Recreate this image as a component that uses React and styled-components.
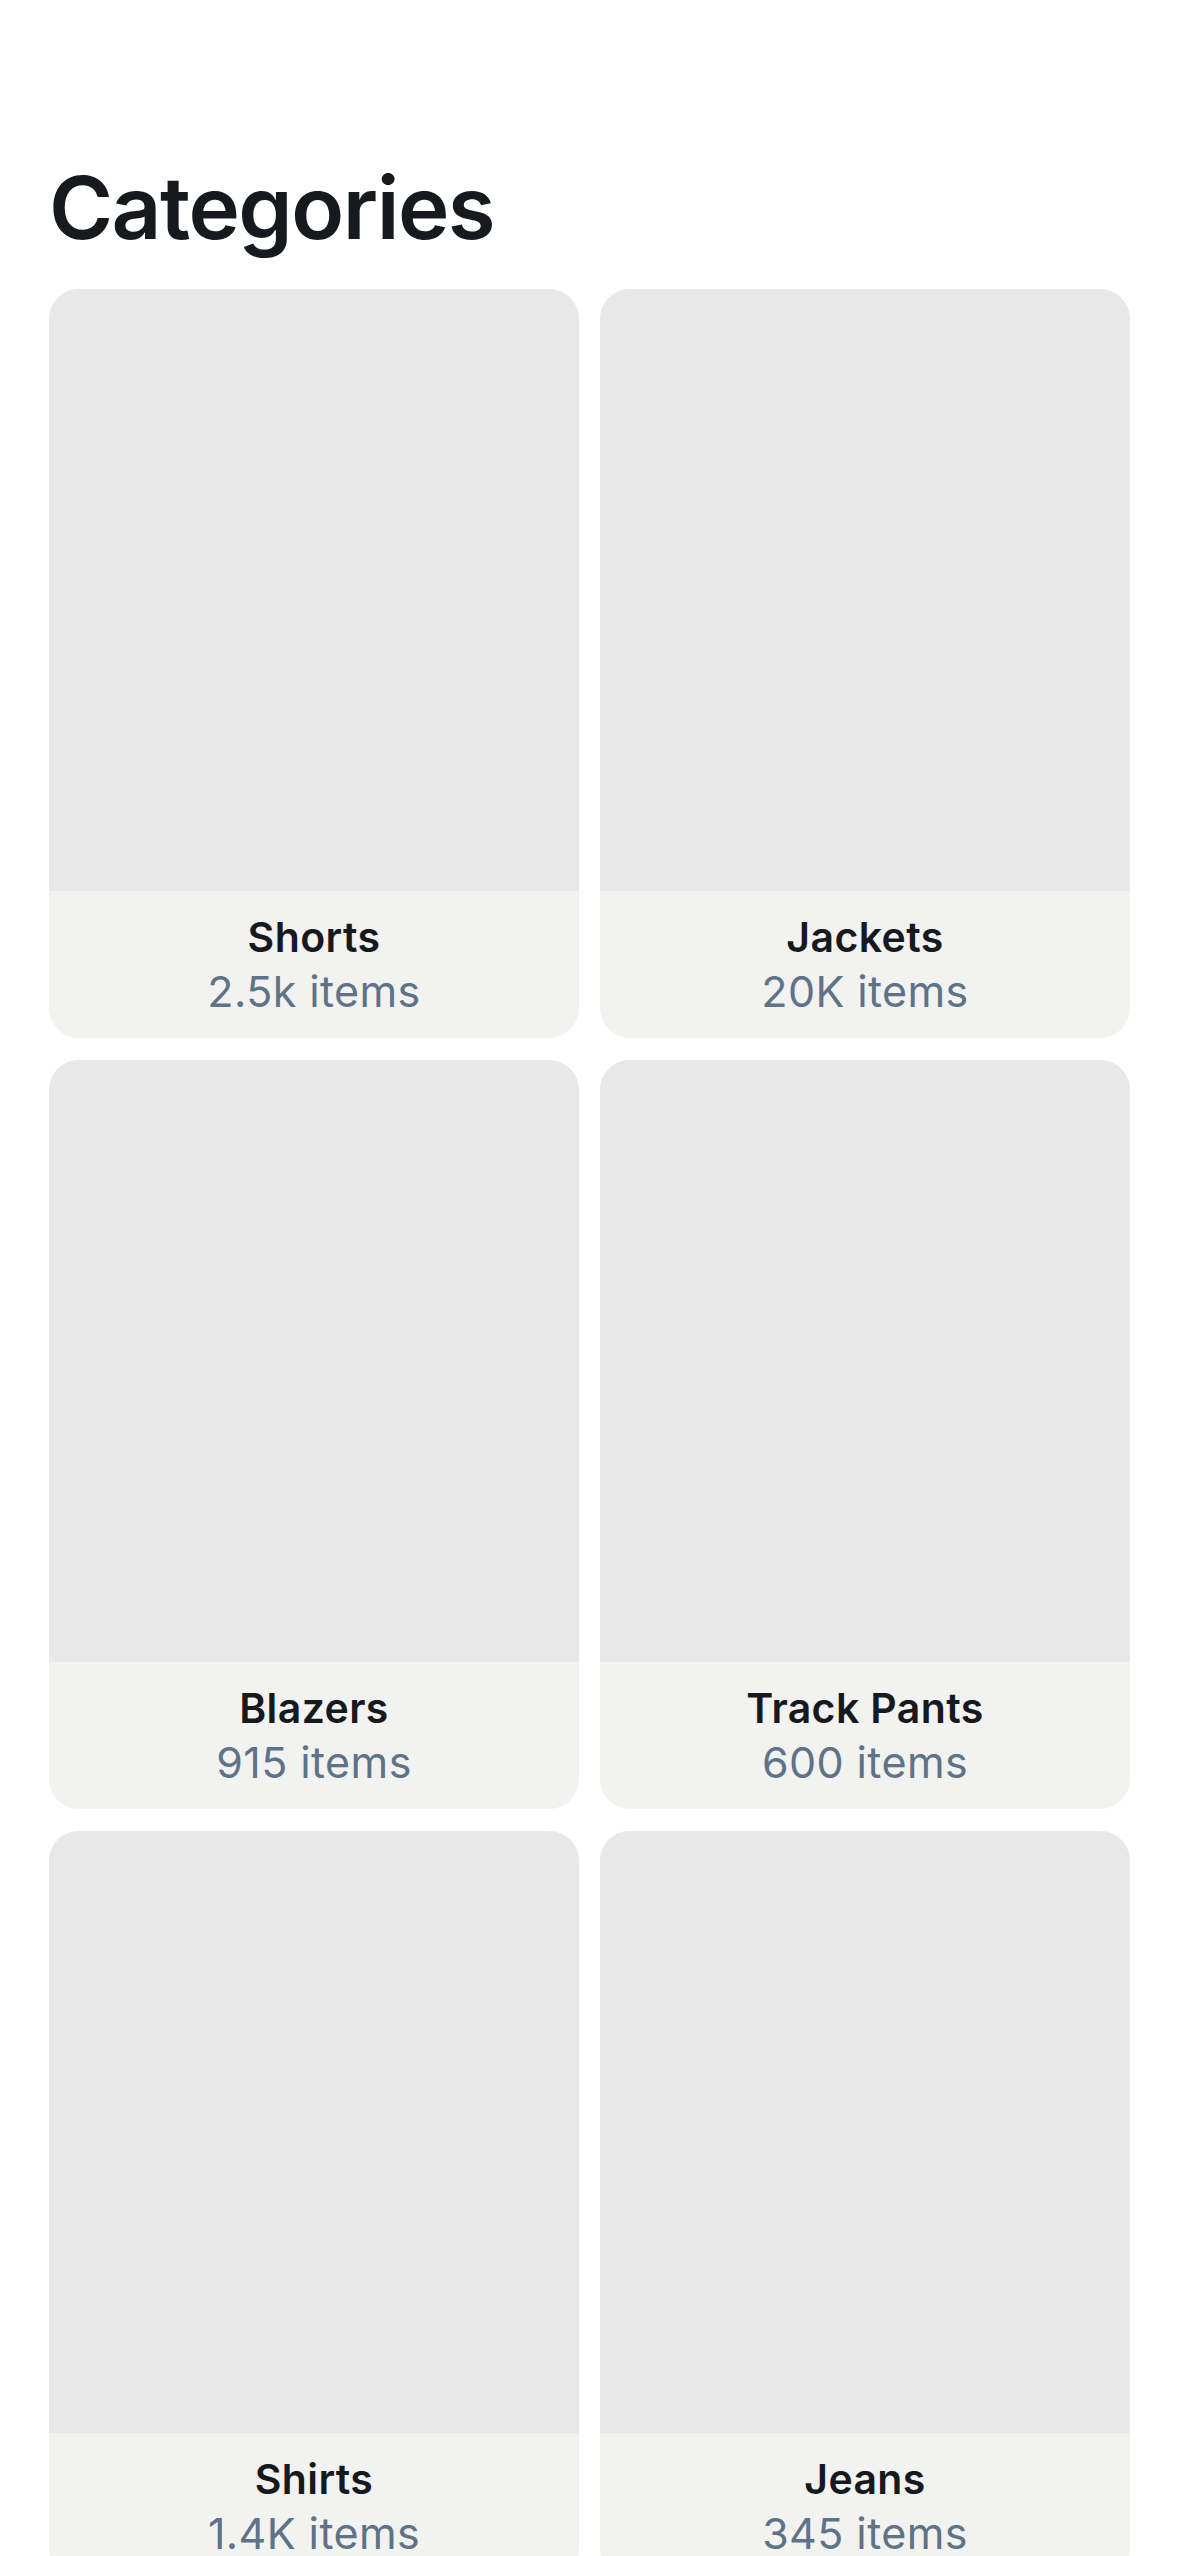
import React from "react";
import styled, { createGlobalStyle } from "styled-components";

const GlobalStyle = createGlobalStyle`
  html, body {
    margin: 0;
    padding: 0;
    background: #ffffff;
    font-family: Inter, "Noto Sans", sans-serif;
  }
`;

const Page = styled.div`
  padding: 156px 49px 0;
`;

const Title = styled.h1`
  margin: 0 0 29px;
  font-size: 87px;
  line-height: 104px;
  font-weight: 600;
  letter-spacing: -1.5px;
  color: #16191d;
`;

const Grid = styled.div`
  display: grid;
  grid-template-columns: 1fr 1fr;
  column-gap: 21px;
  row-gap: 22px;
`;

const Card = styled.div`
  border-radius: 30px;
  overflow: hidden;
  background: #f2f2f1;
`;

const Thumb = styled.div`
  height: 602px;
  background: #e8e8e8;
`;

const Footer = styled.div`
  display: flex;
  flex-direction: column;
  align-items: center;
  padding: 19px 0 20px;
`;

const Name = styled.div`
  font-size: 41px;
  line-height: 54px;
  font-weight: 600;
  letter-spacing: 0.4px;
  color: #16191d;
`;

const Count = styled.div`
  font-size: 43px;
  line-height: 54px;
  font-weight: 400;
  letter-spacing: 0.4px;
  color: #5e7387;
`;

const categories = [
  { name: "Shorts", count: "2.5k items" },
  { name: "Jackets", count: "20K items" },
  { name: "Blazers", count: "915 items" },
  { name: "Track Pants", count: "600 items" },
  { name: "Shirts", count: "1.4K items" },
  { name: "Jeans", count: "345 items" },
];

function App() {
  return (
    <>
      <GlobalStyle />
      <Page>
        <Title>Categories</Title>
        <Grid>
          {categories.map(c => (
            <Card key={c.name}>
              <Thumb />
              <Footer>
                <Name>{c.name}</Name>
                <Count>{c.count}</Count>
              </Footer>
            </Card>
          ))}
        </Grid>
      </Page>
    </>
  );
}

export default App;
